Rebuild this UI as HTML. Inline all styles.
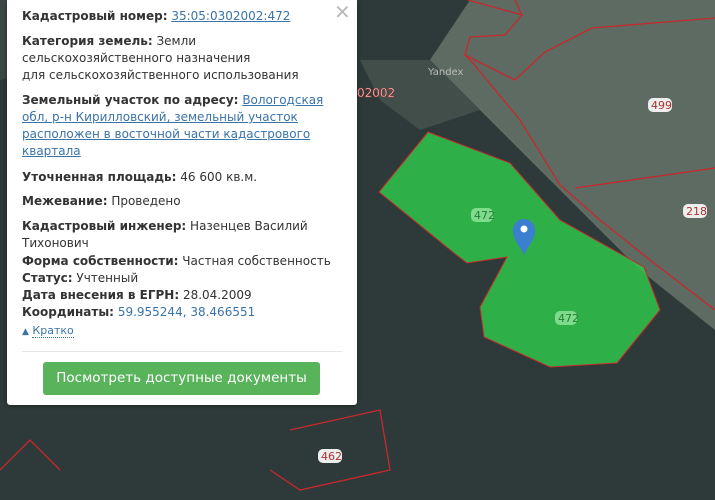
<!DOCTYPE html>
<html><head><meta charset="utf-8"><style>
body{margin:0;width:715px;height:500px;overflow:hidden;position:relative;background:#2f3b3a;font-family:"DejaVu Sans","Liberation Sans",sans-serif}
svg{position:absolute;left:0;top:0}
.pop{position:absolute;left:7px;top:0;width:350px;height:405px;background:#fff;border-radius:0 0 3px 3px;box-shadow:0 1px 4px rgba(0,0,0,.4)}
.pop p{margin:0;position:absolute;left:15px;font-size:12px;line-height:17px;color:#333;white-space:nowrap}
b{font-weight:bold;color:#333}
a{color:#3a73a8;text-decoration:underline}
.x{position:absolute;left:327px;top:0;font-size:20px;color:#bbb}
.btn{position:absolute;left:36px;top:362px;width:277px;height:33px;background:#58b35b;border-radius:3px;color:#fff;font-size:13.5px;line-height:33px;text-align:center}
</style></head><body>
<svg width="715" height="500">
<rect width="715" height="500" fill="#2e3a39"/>
<polygon points="470,0 715,0 715,330 640,270 560,190 480,110 430,60" fill="#5d6b62"/>
<polygon points="360,60 430,60 480,110 420,130 380,100" fill="#414e4a"/>
<polygon points="0,0 120,0 60,60 0,80" fill="#3a4745"/>
<g fill="none" stroke="#c8282d" stroke-width="1.3">
<polyline points="468,0 522,15 505,35 470,37 465,55 515,80 545,52 592,28 715,18"/>
<polyline points="522,15 515,0"/>
<polyline points="465,55 472,62 520,120 560,185 600,220 650,260 715,310"/>
<polyline points="575,188 715,168"/>
<polyline points="330,0 300,60 240,120 150,200"/>
<polyline points="290,430 380,410 390,470 300,490 270,470"/>
<polyline points="0,470 30,440 60,470"/>
</g>
<polygon points="428,132 510,163 560,220 644,267 660,310 617,363 550,367 484,337 480,307 507,257 467,263 454,253 379,192" fill="#2fc44a" fill-opacity=".85" stroke="#c8282d" stroke-width="1"/>
<g font-family="DejaVu Sans" font-size="11">
<rect x="471" y="208" width="22" height="14" rx="5" fill="#7fdc8a"/><text x="474" y="219" fill="#2a7a3a">472</text>
<rect x="555" y="311" width="22" height="14" rx="5" fill="#7fdc8a"/><text x="558" y="322" fill="#2a7a3a">472</text>
<rect x="648" y="98" width="24" height="14" rx="5" fill="#eee"/><text x="651" y="109" fill="#a33">499</text>
<rect x="683" y="204" width="24" height="14" rx="5" fill="#eee"/><text x="686" y="215" fill="#a33">218</text>
<rect x="318" y="449" width="24" height="14" rx="5" fill="#eee"/><text x="321" y="460" fill="#a33">462</text>
<text x="428" y="75" fill="#bbb" font-size="10">Yandex</text>
<text x="357" y="97" fill="#fff" stroke="#a33" stroke-width=".6" font-size="12">02002</text>
</g>
<path d="M524,255 C520,246 513,240 513,230 A11,11 0 0 1 535,230 C535,240 528,246 524,255Z" fill="#3a7fd0"/>
<circle cx="524" cy="229" r="3.5" fill="#fff"/>
</svg>
<div class="pop">
<span class="x">✕</span>
<p style="top:8px"><b>Кадастровый номер:</b> <a>35:05:0302002:472</a></p>
<p style="top:33px"><b>Категория земель:</b> Земли<br>сельскохозяйственного назначения<br>для сельскохозяйственного использования</p>
<p style="top:92px"><b>Земельный участок по адресу:</b> <a>Вологодская</a><br><a>обл, р-н Кирилловский, земельный участок</a><br><a>расположен в восточной части кадастрового</a><br><a>квартала</a></p>
<p style="top:169px"><b>Уточненная площадь:</b> 46 600 кв.м.</p>
<p style="top:193px"><b>Межевание:</b> Проведено</p>
<p style="top:218px"><b>Кадастровый инженер:</b> Назенцев Василий<br>Тихонович</p>
<p style="top:253px"><b>Форма собственности:</b> Частная собственность</p>
<p style="top:270px"><b>Статус:</b> Учтенный</p>
<p style="top:287px"><b>Дата внесения в ЕГРН:</b> 28.04.2009</p>
<p style="top:304px"><b>Координаты:</b> <span style="color:#3a73a8">59.955244, 38.466551</span></p>
<p style="top:322px;font-size:11px;color:#3a73a8"><span style="font-size:9px">▲</span> <span style="border-bottom:1px dotted #3a73a8">Кратко</span></p>
<div style="position:absolute;left:15px;right:15px;top:351px;border-top:1px solid #e5e5e5"></div>
<div class="btn">Посмотреть доступные документы</div>
</div>
</body></html>
